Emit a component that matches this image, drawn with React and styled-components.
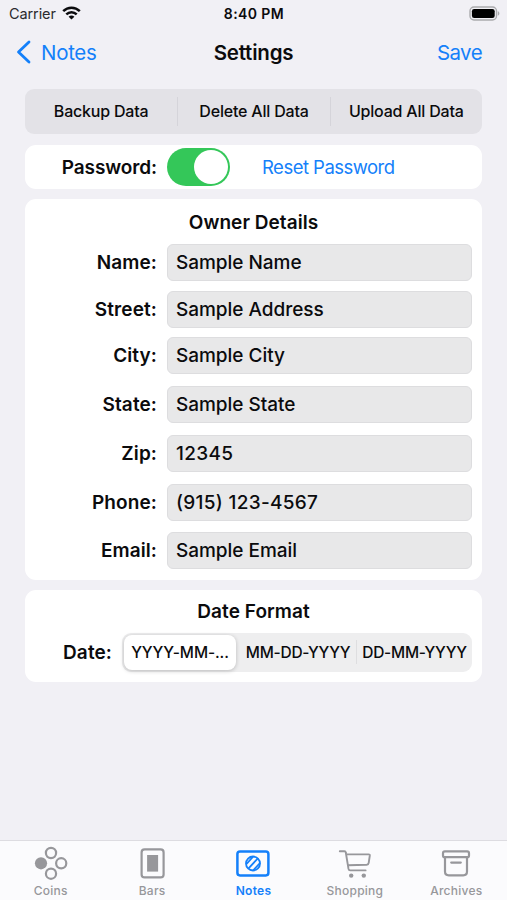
import { useState } from "react";
import styled, { createGlobalStyle } from "styled-components";

const GlobalStyle = createGlobalStyle`
    *{
        box-sizing: border-box;
    }
    body{
        margin: 0;
        background-color: #F1F0F5;
        font-family: Inter, "Liberation Sans", sans-serif;
        color: #0B0B0D;
    }
    button, input{
        font: inherit;
        letter-spacing: inherit;
        color: inherit;
        border: none;
        background: none;
        padding: 0;
        margin: 0;
    }
`

const Screen = styled.div`
    width: 100%;
    height: 900px;
    display: flex;
    flex-direction: column;
    overflow: hidden;
`

const StatusBar = styled.header`
    display: grid;
    grid-template-columns: 1fr auto 1fr;
    align-items: center;
    height: 28px;
    padding: 0 7px 0 9px;
    font-size: 14.5px;
`

const Carrier = styled.div`
    display: flex;
    align-items: center;
    gap: 6px;
    margin-top: -2px;
    letter-spacing: -0.1px;
    color: #2A2A2D;
`

const Clock = styled.span`
    margin: -2px 1px 0 0;
    font-size: 14px;
    font-weight: 600;
    letter-spacing: 0.4px;
`

const BatteryIcon = styled.svg`
    justify-self: end;
    margin-top: -2px;
`

const NavBar = styled.nav`
    display: grid;
    grid-template-columns: 1fr auto 1fr;
    align-items: center;
    height: 48px;
    padding: 0 25px 0 16px;
    font-size: 20.5px;
`

const NavButton = styled.button`
    display: flex;
    align-items: center;
    gap: 10px;
    justify-self: ${(props) => props.$side};
    color: #1480FA;
    letter-spacing: ${(props) => props.$spacing || "-0.3px"};
`

const NavTitle = styled.h1`
    margin: 0 0 0 9px;
    font-size: 20.5px;
    font-weight: 600;
    letter-spacing: -0.2px;
`

const Content = styled.main`
    flex: 1;
    display: flex;
    flex-direction: column;
    padding: 13px 25px 0;
`

const ActionBar = styled.div`
    display: grid;
    grid-template-columns: repeat(3, 1fr);
    height: 45px;
    padding: 8px 0;
    margin-bottom: 11px;
    border-radius: 9px;
    background-color: #E3E2E7;
`

const Action = styled.button`
    padding-bottom: 1px;
    font-size: 16px;
    font-weight: 500;
    letter-spacing: -0.2px;
    white-space: nowrap;
    & + &{
        border-left: 1px solid #D5D4DA;
    }
`

const Card = styled.section`
    height: ${(props) => props.$height};
    margin-bottom: 10px;
    padding: 0 10px 0 0;
    border-radius: 11px;
    background-color: #FFFFFF;
`

const PasswordRow = styled.div`
    display: flex;
    align-items: center;
    height: 100%;
`

const Label = styled.label`
    width: ${(props) => props.$width || "132px"};
    text-align: right;
    font-size: 19px;
    font-weight: 600;
    letter-spacing: ${(props) => props.$spacing || "0.1px"};
`

const Toggle = styled.button`
    display: flex;
    justify-content: ${(props) => (props.$on ? "flex-end" : "flex-start")};
    width: 63px;
    height: 38px;
    margin-left: 10px;
    padding: 2px;
    border-radius: 19px;
    background-color: ${(props) => (props.$on ? "#34C759" : "#E9E9EB")};
`

const Knob = styled.span`
    width: 34px;
    height: 34px;
    border-radius: 50%;
    background-color: #FFFFFF;
`

const ResetButton = styled.button`
    margin-left: 32px;
    color: #1480FA;
    font-size: 18.5px;
    letter-spacing: -0.52px;
`

const CardTitle = styled.h2`
    margin: 0 -10px 0 0;
    height: ${(props) => props.$height};
    line-height: ${(props) => props.$line};
    text-align: center;
    font-size: 19px;
    font-weight: 600;
    letter-spacing: 0.05px;
`

const FieldRow = styled.div`
    display: flex;
    align-items: center;
    gap: 10px;
    margin-bottom: ${(props) => props.$gap}px;
`

const Field = styled.input`
    flex: 1;
    min-width: 0;
    height: 37px;
    padding: 0 8px;
    border: 1px solid #DDDDDF;
    border-radius: 6px;
    background-color: #E8E8E9;
    font-size: 19px;
    font-weight: 500;
    letter-spacing: ${(props) => (props.$numeric ? "0.3px" : "-0.03px")};
`

const DateRow = styled.div`
    display: flex;
    align-items: center;
    gap: 10px;
`

const Segments = styled.div`
    flex: 1;
    display: grid;
    grid-template-columns: repeat(3, 1fr);
    height: 39px;
    padding: 2px 0 2px 2px;
    border-radius: 9px;
    background-color: #EEEEEF;
`

const Segment = styled.button`
    display: flex;
    align-items: center;
    justify-content: center;
    min-width: 0;
    margin-right: ${(props) => (props.$selected ? "4px" : "0")};
    padding-bottom: 1px;
    border-radius: 8px;
    background-color: ${(props) => (props.$selected ? "#FFFFFF" : "transparent")};
    box-shadow: ${(props) => (props.$selected ? "0 1px 4px rgba(0, 0, 0, 0.22)" : "none")};
    font-size: 15.5px;
    font-weight: 500;
    letter-spacing: ${(props) => (props.$selected ? "-0.1px" : "-0.25px")};
    white-space: nowrap;
`

const Divider = styled.span`
    width: 1px;
    height: 24px;
    margin: 0 5px 0 -5px;
    background-color: #DEDEE0;
`

const TabBar = styled.footer`
    display: grid;
    grid-template-columns: repeat(5, 1fr);
    height: 60px;
    border-top: 1px solid #DDDCE1;
    background-color: #FBFBFD;
`

const Tab = styled.button`
    display: flex;
    flex-direction: column;
    align-items: center;
    padding-top: 4px;
    color: ${(props) => (props.$active ? "#1480FA" : "#97979B")};
    font-size: 12px;
    font-weight: ${(props) => (props.$active ? 600 : 500)};
    letter-spacing: 0.25px;
    line-height: 16px;
    & > svg{
        display: block;
        margin-bottom: 2px;
    }
`

const fields = [
    { label: "Name:", value: "Sample Name", gap: 9.5 },
    { label: "Street:", value: "Sample Address", gap: 9.5 },
    { label: "City:", value: "Sample City", gap: 12 },
    { label: "State:", value: "Sample State", gap: 11.5 },
    { label: "Zip:", value: "12345", gap: 12, numeric: true },
    { label: "Phone:", value: "(915) 123-4567", gap: 11.5, numeric: true },
    { label: "Email:", value: "Sample Email", gap: 0 },
]

const dateFormats = ["YYYY-MM-...", "MM-DD-YYYY", "DD-MM-YYYY"]

function TabIcon({ children })
{
    return(
        <svg width="38" height="36" viewBox="0 0 38 36" fill="none" stroke="currentColor" strokeWidth="2.2" strokeLinejoin="round" strokeLinecap="round">
            {children}
        </svg>
    )
}

const tabs = [
    {
        name: "Coins",
        icon: (
            <TabIcon>
                <circle cx="19" cy="8" r="5.1" />
                <circle cx="9" cy="18.3" r="6.1" fill="currentColor" stroke="none" />
                <circle cx="29.2" cy="18.3" r="5.1" />
                <circle cx="19" cy="28.7" r="5.1" />
            </TabIcon>
        ),
    },
    {
        name: "Bars",
        icon: (
            <TabIcon>
                <rect x="8.6" y="4.4" width="22" height="28" rx="3" />
                <rect x="14.1" y="10" width="11" height="16.6" fill="currentColor" stroke="none" />
            </TabIcon>
        ),
    },
    {
        name: "Notes",
        icon: (
            <TabIcon>
                <rect x="3.4" y="6.4" width="31" height="24" rx="2.6" strokeWidth="2.5" />
                <circle cx="19" cy="18.5" r="7" strokeWidth="1.8" />
                <path d="M13 18.5l5.6-6.3M15 22.8l8.6-9.2M19.5 25l6-6.5" strokeWidth="1.8" />
            </TabIcon>
        ),
    },
    {
        name: "Shopping",
        icon: (
            <TabIcon>
                <path d="M3.8 6.3h4.6c.8 0 1.3.4 1.4 1.2l2.7 16.4c.2 1 .8 1.5 1.7 1.5h15.4M10.2 9.4h22.4c.9 0 1.3.5 1.2 1.3l-1.1 7.1c-.2 1.2-.9 1.8-2 1.9l-18.8.5" strokeWidth="1.9" />
                <circle cx="15.2" cy="30.6" r="2.2" fill="currentColor" stroke="none" />
                <circle cx="27.8" cy="30.6" r="2.2" fill="currentColor" stroke="none" />
            </TabIcon>
        ),
    },
    {
        name: "Archives",
        icon: (
            <TabIcon>
                <rect x="6" y="6.4" width="26" height="5.8" rx="1.8" />
                <path d="M8 12.2v14.4c0 2.5 1.4 3.8 3.8 3.8h14.4c2.4 0 3.8-1.3 3.8-3.8V12.2M14.2 17.6h9.6" />
            </TabIcon>
        ),
    },
]

function App()
{
    const [passwordOn, setPasswordOn] = useState(true)
    const [format, setFormat] = useState(0)
    const [tab, setTab] = useState("Notes")

    return(
        <Screen>
            <GlobalStyle />
            <StatusBar>
                <Carrier>
                    Carrier
                    <svg width="19" height="14" viewBox="0 0 19 14" fill="none" stroke="#0B0B0D" strokeWidth="2.5">
                        <path d="M1.2 5.1C5.9.5 13.1.5 17.8 5.1M4.3 8.3c3-2.9 7.4-2.9 10.4 0" />
                        <path d="M9.5 13.6L6.6 10.7c1.7-1.5 4.1-1.5 5.8 0z" fill="#0B0B0D" stroke="none" />
                    </svg>
                </Carrier>
                <Clock>8:40 PM</Clock>
                <BatteryIcon width="31" height="15" viewBox="0 0 31 15">
                    <rect x="1" y="1" width="26.5" height="13" rx="4" fill="none" stroke="#AAAAAD" strokeWidth="1.4" />
                    <rect x="2.9" y="2.9" width="22.8" height="9.2" rx="2.3" fill="#000000" />
                    <path d="M28.8 5.3c2.1.7 2.1 3.7 0 4.4z" fill="#AAAAAD" />
                </BatteryIcon>
            </StatusBar>
            <NavBar>
                <NavButton $side="start">
                    <svg width="15" height="24" viewBox="0 0 15 24" fill="none" stroke="currentColor" strokeWidth="2.8" strokeLinecap="round" strokeLinejoin="round">
                        <path d="M13 2L2.5 12 13 22" />
                    </svg>
                    Notes
                </NavButton>
                <NavTitle>Settings</NavTitle>
                <NavButton $side="end" $spacing="-0.6px">Save</NavButton>
            </NavBar>
            <Content>
                <ActionBar>
                    <Action>Backup Data</Action>
                    <Action>Delete All Data</Action>
                    <Action>Upload All Data</Action>
                </ActionBar>
                <Card $height="44px">
                    <PasswordRow>
                        <Label $spacing="-0.1px">Password:</Label>
                        <Toggle $on={passwordOn} onClick={() => setPasswordOn(!passwordOn)}>
                            <Knob />
                        </Toggle>
                        <ResetButton>Reset Password</ResetButton>
                    </PasswordRow>
                </Card>
                <Card $height="381px">
                    <CardTitle $height="45px" $line="48px">Owner Details</CardTitle>
                    {fields.map((field) => (
                        <FieldRow key={field.label} $gap={field.gap}>
                            <Label>{field.label}</Label>
                            <Field $numeric={field.numeric} defaultValue={field.value} />
                        </FieldRow>
                    ))}
                </Card>
                <Card $height="92px">
                    <CardTitle $height="43px" $line="44px">Date Format</CardTitle>
                    <DateRow>
                        <Label $width="87px">Date:</Label>
                        <Segments>
                            {dateFormats.map((name, index) => (
                                <Segment key={name} $selected={format === index} onClick={() => setFormat(index)}>
                                    {index === 2 && format !== 1 && <Divider />}
                                    {name}
                                </Segment>
                            ))}
                        </Segments>
                    </DateRow>
                </Card>
            </Content>
            <TabBar>
                {tabs.map((item) => (
                    <Tab key={item.name} $active={item.name === tab} onClick={() => setTab(item.name)}>
                        {item.icon}
                        {item.name}
                    </Tab>
                ))}
            </TabBar>
        </Screen>
    )
}
export default App;
